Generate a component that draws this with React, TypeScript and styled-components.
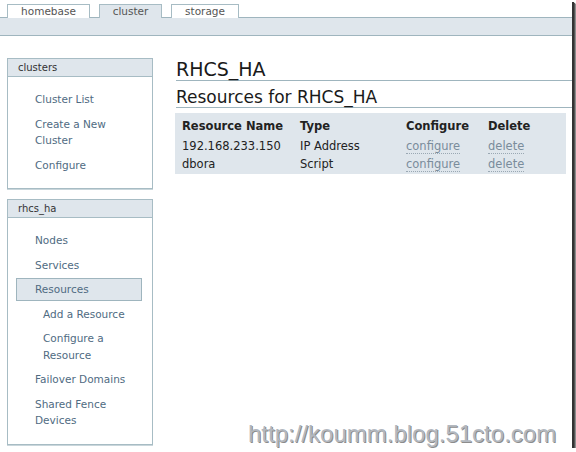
import React from 'react';
import styled, { createGlobalStyle } from 'styled-components';

const GlobalStyle = createGlobalStyle`
  html, body {
    margin: 0;
    padding: 0;
    background: #ffffff;
  }
  body {
    font-family: "DejaVu Sans", Verdana, sans-serif;
    color: #222;
  }
`;

const Frame = styled.div`
  position: relative;
  width: 572px;
  height: 448px;
  background: #fff;
  overflow: hidden;
  box-shadow: 2px 2px 0 #333, 3px 3px 1px #555, 4px 4px 1px #999;
`;

const TabRow = styled.div`
  display: flex;
  gap: 9px;
  padding: 4px 0 0 7px;
  height: 13px;
  position: relative;
  z-index: 1;
`;

const Tab = styled.div<{ $active?: boolean; $width: number }>`
  box-sizing: border-box;
  width: ${p => p.$width}px;
  height: 14px;
  border: 1px solid #a7bcc4;
  border-bottom: none;
  background: ${p => (p.$active ? '#dfe6ec' : '#fff')};
  color: #555;
  font-size: 10.5px;
  line-height: 13px;
  text-align: center;
`;

const Band = styled.div`
  height: 17px;
  border-top: 1px solid #9fb5be;
  border-bottom: 1px solid #9fb5be;
  background: #dfe6ec;
`;

const Body = styled.div`
  display: flex;
  padding: 22px 0 0 7px;
`;

const Sidebar = styled.div`
  width: 146px;
  flex: none;
  display: flex;
  flex-direction: column;
  gap: 10px;
  margin-right: 22px;
`;

const Box = styled.div`
  box-sizing: border-box;
  border: 1px solid #a7bcc4;
  box-shadow: 0 1px 0 #c9d6db;
`;

const BoxHeader = styled.div`
  height: 17px;
  line-height: 17px;
  padding-left: 10px;
  background: #dfe6ec;
  border-bottom: 1px solid #a7bcc4;
  font-size: 10px;
  color: #333;
`;

const NavList = styled.div`
  display: flex;
  flex-direction: column;
  gap: 8px;
  padding: 14px 0 15px;
`;

const NavItem = styled.div<{ $sub?: boolean; $active?: boolean }>`
  font-size: 10.5px;
  line-height: 16.5px;
  color: #4f6b82;
  padding-left: ${p => (p.$sub ? 35 : p.$active ? 18 : 27)}px;
  ${p =>
    p.$active &&
    `
    margin: -3px 10px -3px 8px;
    padding-top: 2px;
    padding-bottom: 2px;
    background: #dfe6ec;
    border: 1px solid #9fb5be;
  `}
`;

const Main = styled.div`
  flex: 1;
  padding-left: 1px;
`;

const Title = styled.h1`
  margin: 0;
  font-size: 19px;
  font-weight: normal;
  line-height: 22px;
  color: #1a1a1a;
  border-bottom: 1px solid #9fb5be;
`;

const SubTitle = styled.h2`
  margin: 6px 0 0;
  font-size: 17px;
  font-weight: normal;
  line-height: 20px;
  color: #1a1a1a;
  border-bottom: 1px solid #9fb5be;
`;

const Table = styled.div`
  margin: 5px 6px 0 -1px;
  padding: 5px 0 1px 7px;
  background: #dfe6ec;
  display: grid;
  grid-template-columns: 118px 106px 82px auto;
  font-size: 11.5px;
  line-height: 17.5px;
  color: #222;
`;

const HeadCell = styled.div`
  font-weight: bold;
  margin-bottom: 2.5px;
`;

const Cell = styled.div``;

const LinkCell = styled.div`
  color: #7a8c9b;
  span {
    border-bottom: 1px dotted #9aa8b3;
  }
`;

const Watermark = styled.div`
  position: absolute;
  left: 248px;
  top: 420px;
  font-family: "Liberation Sans", Arial, sans-serif;
  font-size: 24px;
  line-height: 28px;
  color: #b3b8bf;
  text-shadow: 1px 1px 0 #8c8c8c;
`;

const tabs = [
  { label: 'homebase', width: 83 },
  { label: 'cluster', width: 63, active: true },
  { label: 'storage', width: 68 },
];

const resources = [
  { name: '192.168.233.150', type: 'IP Address' },
  { name: 'dbora', type: 'Script' },
];

export default function App() {
  return (
    <>
      <GlobalStyle />
      <Frame>
        <TabRow>
          {tabs.map(t => (
            <Tab key={t.label} $width={t.width} $active={t.active}>
              {t.label}
            </Tab>
          ))}
        </TabRow>
        <Band />
        <Body>
          <Sidebar>
            <Box>
              <BoxHeader>clusters</BoxHeader>
              <NavList>
                <NavItem>Cluster List</NavItem>
                <NavItem>Create a New<br />Cluster</NavItem>
                <NavItem>Configure</NavItem>
              </NavList>
            </Box>
            <Box>
              <BoxHeader>rhcs_ha</BoxHeader>
              <NavList>
                <NavItem>Nodes</NavItem>
                <NavItem>Services</NavItem>
                <NavItem $active>Resources</NavItem>
                <NavItem $sub>Add a Resource</NavItem>
                <NavItem $sub>Configure a<br />Resource</NavItem>
                <NavItem>Failover Domains</NavItem>
                <NavItem>Shared Fence<br />Devices</NavItem>
              </NavList>
            </Box>
          </Sidebar>
          <Main>
            <Title>RHCS_HA</Title>
            <SubTitle>Resources for RHCS_HA</SubTitle>
            <Table>
              <HeadCell>Resource Name</HeadCell>
              <HeadCell>Type</HeadCell>
              <HeadCell>Configure</HeadCell>
              <HeadCell>Delete</HeadCell>
              {resources.map(r => (
                <React.Fragment key={r.name}>
                  <Cell>{r.name}</Cell>
                  <Cell>{r.type}</Cell>
                  <LinkCell><span>configure</span></LinkCell>
                  <LinkCell><span>delete</span></LinkCell>
                </React.Fragment>
              ))}
            </Table>
          </Main>
        </Body>
        <Watermark>http://koumm.blog.51cto.com</Watermark>
      </Frame>
    </>
  );
}
